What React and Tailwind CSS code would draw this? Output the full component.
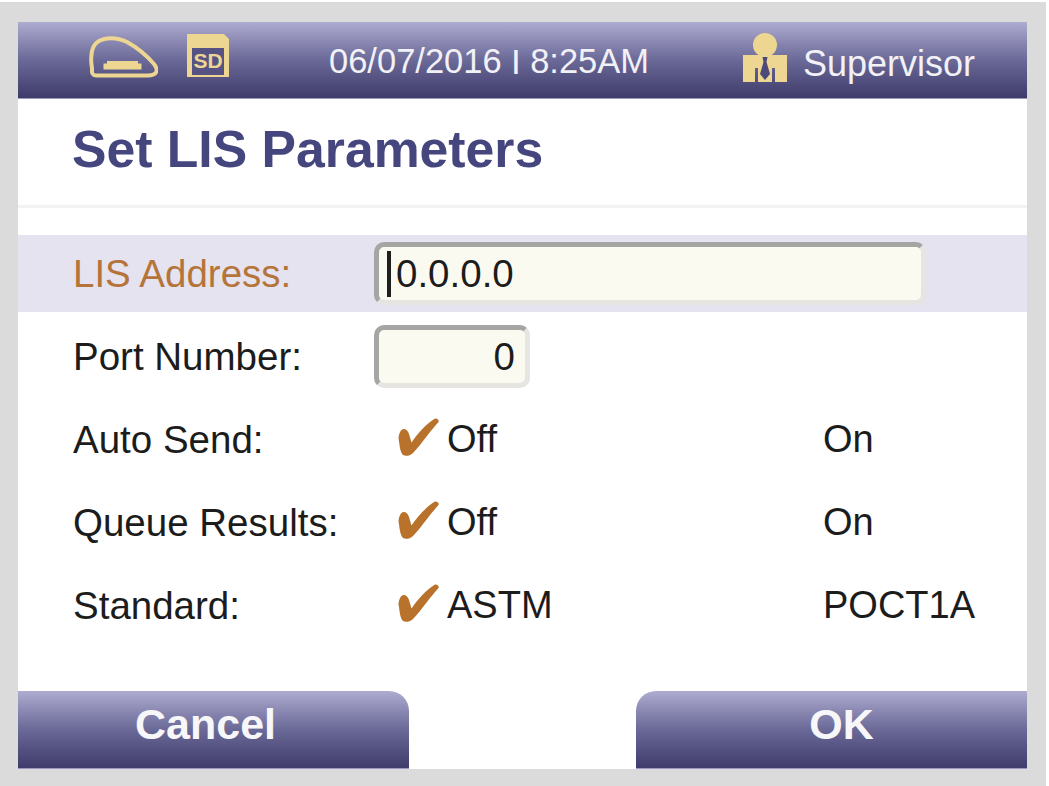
const barGradient = 'bg-gradient-to-b from-[#aeacd0] via-[#6b6997] to-[#3f3c6b] border-b border-[#9a99c2]';

function DriveIcon() {
  return (
    <svg width="70" height="42" viewBox="0 0 70 42" fill="none">
      <path
        d="M4 32 C3 27 3 23 3.5 19 C4 11 7 3 22 2.3 C29 2 34 3.5 39 6 C50 12 60 21 66 28 C69 32 69 35 68 36.5 C66 39 63 39.5 60 39.5 L9 39.5 C6 39.5 4 38 4 36 Z"
        stroke="#ecd692"
        strokeWidth="4"
      />
      <rect x="15.5" y="27.5" width="38" height="6" fill="#ecd692" />
      <rect x="19" y="25" width="31" height="3" fill="#ecd692" />
    </svg>
  );
}

function SdIcon() {
  return (
    <div className="relative h-[43px] w-[42px]">
      <svg width="42" height="43" viewBox="0 0 42 43" className="absolute inset-0">
        <path d="M0 0 H37 L42 5 V43 H0 Z" fill="#ecd692" />
        <rect x="5" y="14" width="32" height="27" fill="#565384" />
      </svg>
      <span className="absolute left-[5px] top-[15px] w-[32px] text-center text-[21px] font-bold leading-[24px] text-[#ecd692]">
        SD
      </span>
    </div>
  );
}

function PersonIcon() {
  return (
    <svg width="45" height="49" viewBox="0 0 45 49">
      <circle cx="22" cy="12" r="12" fill="#ecd692" />
      <path d="M0 22 H44 V49 H32 V35 H29 V49 H15 V35 H12 V49 H0 Z" fill="#ecd692" />
      <path d="M19.5 24 H24.5 L23.5 29 L27 41 L22 47 L17 41 L20.5 29 Z" fill="#4c4a78" />
    </svg>
  );
}

function Check() {
  return (
    <svg width="41" height="38" viewBox="0 0 41 38" className="mb-[6px] shrink-0">
      <path
        d="M0.5 20 C1 15 3 11 5.5 11 C8.5 11 10 13 11 16 L13.5 24.5 C20 15 28 6 37 0.5 C39 0 41.5 2 40.5 4 C36 9 32 14 29 18 C24 24 20 30 15 35 C12 38 7 38.5 5 37 C3 35 2 31 1.5 27 Z"
        fill="#b8722c"
      />
    </svg>
  );
}

function Field({ width, align, caret, value }) {
  return (
    <div
      className={`flex h-[63px] items-center rounded-[10px] border-[5px] border-t-[#a5a5a4] border-l-[#a5a5a4] border-r-[#e6e5e1] border-b-[#e6e5e1] bg-[#fbfaf0] text-[38.5px] ${width} ${align}`}
    >
      {caret && <span className="ml-[8px] mr-[5px] h-[46px] w-[4px] bg-[#1f1f1f]" />}
      <span>{value}</span>
    </div>
  );
}

function OptionRow({ label, left, right }) {
  return (
    <div className="flex h-[77px] items-center pl-[55px]">
      <span className="w-[325px] shrink-0 text-[38.5px]">{label}</span>
      <Check />
      <span className="ml-[8px] w-[376px] shrink-0">{left}</span>
      <span>{right}</span>
    </div>
  );
}

export default function App() {
  return (
    <div className="h-[786px] w-[1049px] overflow-hidden bg-white pr-[3px] pt-[2px] font-['Liberation_Sans',Arial,sans-serif]">
      <div className="h-full w-full bg-[#dcdbdb] pl-[18px] pr-[19px] pt-[20px]">
        <div className="flex h-[747px] w-[1009px] flex-col bg-white text-[38px] text-[#1c1c1c]">
          <header className={`flex h-[77px] shrink-0 items-center ${barGradient} text-[#f1f1f6]`}>
            <div className="mb-[7px] ml-[70px]"><DriveIcon /></div>
            <div className="mb-[10px] ml-[29px]"><SdIcon /></div>
            <span className="ml-[100px] mt-[4px] w-[414px] shrink-0 text-[34.5px]">
              06/07/2016 <span className="mx-[1px] align-[4px] text-[26px] font-bold">|</span> 8:25AM
            </span>
            <div className="mb-[6px]"><PersonIcon /></div>
            <span className="ml-[15px] mt-[8px] text-[36px]">Supervisor</span>
          </header>

          <div className="flex h-[106px] shrink-0 items-center pb-[4px] pl-[54px] text-[51.7px] font-bold text-[#46467f]">
            Set LIS Parameters
          </div>
          <div className="h-[3px] shrink-0 bg-[#f3f1f1]" />

          <div className="mt-[27px] flex h-[77px] shrink-0 items-center bg-[#e5e3ef] pl-[55px]">
            <span className="w-[301px] shrink-0 text-[38.5px] text-[#b5743a]">LIS Address:</span>
            <Field width="w-[552px]" caret value="0.0.0.0" />
          </div>

          <div className="mt-[6px] flex flex-col gap-[6px]">
            <div className="flex h-[77px] items-center pl-[55px]">
              <span className="w-[301px] shrink-0 text-[38.5px]">Port Number:</span>
              <Field width="w-[156px]" align="justify-end pr-[10px]" value="0" />
            </div>
            <OptionRow label="Auto Send:" left="Off" right="On" />
            <OptionRow label="Queue Results:" left="Off" right="On" />
            <OptionRow label="Standard:" left="ASTM" right="POCT1A" />
          </div>

          <footer className="mt-auto flex h-[78px] shrink-0 justify-between text-[43px] font-bold text-[#f7f7fa]">
            <button className={`flex w-[391px] items-center justify-center rounded-tr-[20px] pb-[10px] pr-[16px] ${barGradient}`}>Cancel</button>
            <button className={`flex w-[391px] items-center justify-center rounded-tl-[20px] pb-[10px] pl-[20px] ${barGradient}`}>OK</button>
          </footer>
        </div>
      </div>
    </div>
  );
}
